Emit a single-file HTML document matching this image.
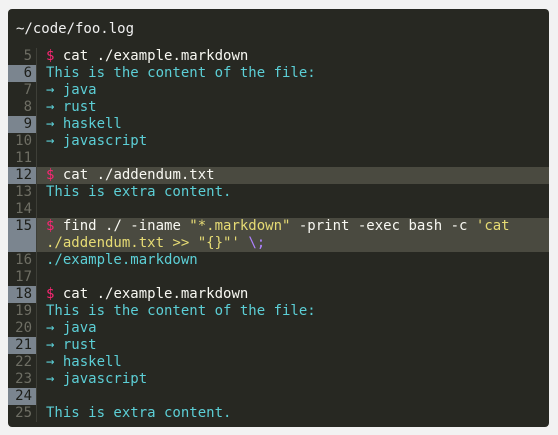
<!DOCTYPE html>
<html><head><style>
body{margin:0;background:#f2f2f2;width:558px;height:435px;overflow:hidden}
.box{position:absolute;left:8px;top:9px;width:541px;height:418px;background:#272822;border-radius:4px;overflow:hidden;font-family:"DejaVu Sans Mono","Liberation Mono",monospace;font-size:14px;color:#f8f8f2}
.title{position:absolute;left:8px;top:12px;line-height:17px;color:#f0f0f0}
.code{position:absolute;left:0;top:39px;width:541px}
.r{display:flex;line-height:17px;height:auto;white-space:pre}
.n{width:24px;padding-right:4px;text-align:right;color:#6e6e64;border-right:1px solid #3e3f38;flex:none}
.t{padding-left:9px;flex:1}
.hn .n{background:#7b858f;color:#1d1e19}
.hl{background:#4a4a40}
.p{color:#f92672}.c{color:#5ccfd6}.s{color:#e6db74}.v{color:#ae81ff}
</style></head><body><div class="box">
<div class="title">~/code/foo.log</div>
<div class="code">
<div class="r"><div class="n">5</div><div class="t"><span class="p">$</span> cat ./example.markdown</div></div>
<div class="r hn"><div class="n">6</div><div class="t c">This is the content of the file:</div></div>
<div class="r"><div class="n">7</div><div class="t c">→ java</div></div>
<div class="r"><div class="n">8</div><div class="t c">→ rust</div></div>
<div class="r hn"><div class="n">9</div><div class="t c">→ haskell</div></div>
<div class="r"><div class="n">10</div><div class="t c">→ javascript</div></div>
<div class="r"><div class="n">11</div><div class="t"> </div></div>
<div class="r hn hl"><div class="n">12</div><div class="t"><span class="p">$</span> cat ./addendum.txt</div></div>
<div class="r"><div class="n">13</div><div class="t c">This is extra content.</div></div>
<div class="r"><div class="n">14</div><div class="t"> </div></div>
<div class="r hn hl"><div class="n">15</div><div class="t"><span class="p">$</span> find ./ -iname <span class="s">"*.markdown"</span> -print -exec bash -c <span class="s">'cat
./addendum.txt >> "{}"'</span> <span class="v">\;</span></div></div>
<div class="r"><div class="n">16</div><div class="t c">./example.markdown</div></div>
<div class="r"><div class="n">17</div><div class="t"> </div></div>
<div class="r hn"><div class="n">18</div><div class="t"><span class="p">$</span> cat ./example.markdown</div></div>
<div class="r"><div class="n">19</div><div class="t c">This is the content of the file:</div></div>
<div class="r"><div class="n">20</div><div class="t c">→ java</div></div>
<div class="r hn"><div class="n">21</div><div class="t c">→ rust</div></div>
<div class="r"><div class="n">22</div><div class="t c">→ haskell</div></div>
<div class="r"><div class="n">23</div><div class="t c">→ javascript</div></div>
<div class="r hn"><div class="n">24</div><div class="t"> </div></div>
<div class="r"><div class="n">25</div><div class="t c">This is extra content.</div></div>
</div></div></body></html>
